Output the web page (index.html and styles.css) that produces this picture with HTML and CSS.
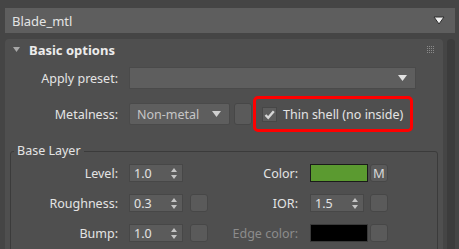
FILE: index.html
```html
<!DOCTYPE html>
<html lang="en">
<head>
    <meta charset="UTF-8">
    <title>Blade_mtl</title>
    <link rel="stylesheet" href="styles.css">
</head>
<body>
    <div class="name-bar">
        <span>Blade_mtl</span>
        <svg class="bar-arrow" width="12" height="9" viewBox="0 0 12 9"><path d="M1 1 H11 L6 8 Z" fill="#f2f2f2" stroke="#2e2e2e" stroke-width="1"/></svg>
    </div>

    <div class="content">
        <div class="panel">
            <div class="panel-head">
                <svg class="head-arrow" width="7" height="6" viewBox="0 0 7 6"><path d="M0 0 H7 L3.5 5 Z" fill="#a8a8a8"/></svg>
                <span class="head-title">Basic options</span>
                <div class="grip">
                    <i></i><i></i><i></i><i></i>
                    <i></i><i></i><i></i><i></i>
                    <i></i><i></i><i></i><i></i>
                    <i></i><i></i><i></i><i></i>
                </div>
            </div>

            <div class="rows">
                <div class="row">
                    <div class="label">Apply preset:</div>
                    <div class="dropdown preset">
                        <span></span>
                        <svg width="9" height="6" viewBox="0 0 9 6"><path d="M0 0 H9 L4.5 6 Z" fill="#e2e2e2"/></svg>
                    </div>
                </div>
                <div class="row">
                    <div class="label">Metalness:</div>
                    <div class="dropdown metal">
                        <span class="dim">Non-metal</span>
                        <svg width="9" height="6" viewBox="0 0 9 6"><path d="M0 0 H9 L4.5 6 Z" fill="#d0d0d0"/></svg>
                    </div>
                    <div class="map-btn tall"></div>
                    <div class="highlight">
                        <div class="checkbox">
                            <svg width="13" height="13" viewBox="0 0 13 13"><path d="M2.5 7 L5.2 9.8 L10.8 3.2" fill="none" stroke="#d6d6d6" stroke-width="2.4"/></svg>
                        </div>
                        <span>Thin shell (no inside)</span>
                    </div>
                </div>
            </div>

            <fieldset class="group">
                <legend>Base Layer</legend>
                <div class="grid">
                    <div class="label">Level:</div>
                    <div class="spinner"><span>1.0</span><svg width="6" height="11" viewBox="0 0 6 11"><path d="M0 4 H6 L3 0 Z M0 7 H6 L3 11 Z" fill="#c4c4c4"/></svg></div>
                    <div></div>
                    <div class="label">Color:</div>
                    <div class="swatch green"></div>
                    <div class="map-btn">M</div>

                    <div class="label">Roughness:</div>
                    <div class="spinner"><span>0.3</span><svg width="6" height="11" viewBox="0 0 6 11"><path d="M0 4 H6 L3 0 Z M0 7 H6 L3 11 Z" fill="#c4c4c4"/></svg></div>
                    <div class="map-btn"></div>
                    <div class="label">IOR:</div>
                    <div class="spinner"><span>1.5</span><svg width="6" height="11" viewBox="0 0 6 11"><path d="M0 4 H6 L3 0 Z M0 7 H6 L3 11 Z" fill="#c4c4c4"/></svg></div>
                    <div class="map-btn"></div>

                    <div class="label">Bump:</div>
                    <div class="spinner"><span>1.0</span><svg width="6" height="11" viewBox="0 0 6 11"><path d="M0 4 H6 L3 0 Z M0 7 H6 L3 11 Z" fill="#c4c4c4"/></svg></div>
                    <div class="map-btn"></div>
                    <div class="label disabled">Edge color:</div>
                    <div class="swatch black"></div>
                    <div class="map-btn"></div>
                </div>
            </fieldset>
        </div>
        <div class="scrollbar"></div>
    </div>
</body>
</html>
```

FILE: styles.css
```css
body {
    margin: 0;
    background-color: #454545;
    font-family: "Noto Sans", "Open Sans", sans-serif;
    font-size: 12.5px;
    color: #e4e4e4;
    width: 459px;
    height: 249px;
    overflow: hidden;
}
.name-bar {
    display: flex;
    align-items: center;
    justify-content: space-between;
    height: 25px;
    margin: 8px 4px 0 5px;
    padding: 0 10px 0 7px;
    background-color: #5e5e5e;
    font-size: 13px;
}
.content {
    display: flex;
    gap: 4px;
    margin: 6px 0 0 5px;
}
.panel {
    width: 438px;
    height: 210px;
    overflow: hidden;
    background-color: #4f4f4f;
    border-radius: 4px 4px 0 0;
}
.scrollbar {
    width: 8px;
    height: 210px;
    background-color: #3c3c3c;
    border-radius: 4px 4px 0 0;
}
.panel-head {
    display: flex;
    align-items: center;
    height: 22px;
    padding: 0 9px 0 8px;
}
.head-arrow {
    margin-right: 9px;
}
.head-title {
    flex: 1;
    font-weight: bold;
    font-size: 13px;
    color: #ececec;
}
.grip {
    display: grid;
    grid-template-columns: repeat(4, 1px);
    gap: 1px;
    margin-top: -2px;
}
.grip i {
    width: 1px;
    height: 1px;
    background-color: #8a8a8a;
}
.rows {
    display: flex;
    flex-direction: column;
    gap: 7px;
    padding-top: 6px;
}
.row {
    display: flex;
    align-items: center;
}
.label {
    width: 113px;
    text-align: right;
    white-space: nowrap;
}
.row .label {
    margin-right: 11px;
}
.dropdown {
    display: flex;
    align-items: center;
    justify-content: space-between;
    box-sizing: border-box;
    height: 22px;
    padding: 0 8px 0 7px;
    background-color: #5e5e5e;
    border: 1px solid #4a4a4a;
}
.preset {
    width: 287px;
}
.metal {
    width: 101px;
    border-radius: 2px;
}
.dim {
    color: #c6c6c6;
}
.map-btn {
    box-sizing: border-box;
    width: 18px;
    height: 18px;
    background-color: #5a5a5a;
    border: 1px solid #474747;
    border-radius: 3px;
    color: #d8d8d8;
    font-size: 13px;
    display: flex;
    align-items: center;
    justify-content: center;
}
.map-btn.tall {
    height: 22px;
    margin-left: 4px;
}
.highlight {
    display: flex;
    align-items: center;
    box-sizing: border-box;
    height: 36px;
    width: 160px;
    margin-left: 1px;
    padding-left: 6px;
    border: 3px solid #ff0000;
    border-radius: 5px;
}
.checkbox {
    box-sizing: border-box;
    width: 15px;
    height: 15px;
    margin-right: 6px;
    background-color: #5c5c5c;
    border: 1px solid #474747;
    display: flex;
    align-items: center;
    justify-content: center;
}
.group {
    margin: 11px 5px 0 5px;
    padding: 5px 0 20px 0;
    border: 1px solid #3b3b3b;
    border-radius: 3px;
    min-width: 0;
}
.group legend {
    margin-left: 3px;
    padding: 0 3px;
    line-height: 16px;
}
.grid {
    display: grid;
    grid-template-columns: 107px 65px 25px 102px 60px 20px;
    grid-auto-rows: 18px;
    row-gap: 12px;
    align-items: center;
}
.grid .label {
    width: auto;
}
.grid .spinner {
    margin-left: 11px;
}
.grid .spinner:nth-child(6n+5) {
    margin-left: 0;
}
.grid .label:nth-child(6n+4) {
    margin-right: 12px;
}
.grid .map-btn:nth-child(6n+3) {
    margin-left: 7px;
}
.spinner {
    display: flex;
    align-items: center;
    justify-content: space-between;
    box-sizing: border-box;
    width: 54px;
    height: 18px;
    padding: 0 5px 0 4px;
    background-color: #5b5b5b;
    border: 1px solid #474747;
}
.swatch {
    box-sizing: border-box;
    width: 58px;
    height: 18px;
    border: 1px solid #1a1a1a;
}
.green {
    background-color: #5b9a30;
}
.black {
    background-color: #000000;
    border-color: #3a3a3a;
}
.disabled {
    color: #8c8c8c;
}
```
